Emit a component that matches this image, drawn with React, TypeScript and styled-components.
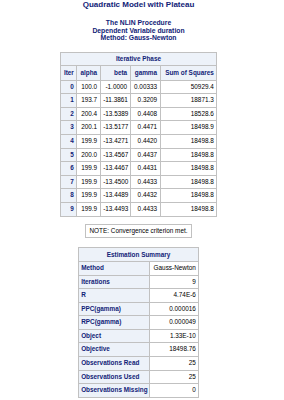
import React from "react";
import styled, { createGlobalStyle } from "styled-components";

const GlobalStyle = createGlobalStyle`
    html, body {
        margin: 0;
        padding: 0;
        background: #ffffff;
    }
    body {
        font-family: "Liberation Sans", Arial, sans-serif;
    }
`;

const Page = styled.div`
    width: 277px;
    display: flex;
    flex-direction: column;
    align-items: center;
    color: #112277;
`;

const Title = styled.div`
    font-size: 8px;
    font-weight: bold;
    line-height: 9.5px;
    margin-bottom: 9.3px;
`;

const Subtitles = styled.div`
    display: flex;
    flex-direction: column;
    align-items: center;
    font-size: 6.8px;
    font-weight: bold;
    line-height: 7.8px;
    margin-bottom: 9.8px;
`;

const Table = styled.table<{ $width: number }>`
    width: ${(p) => p.$width}px;
    table-layout: fixed;
    border-collapse: collapse;
    font-size: 6.4px;
`;

const Caption = styled.th<{ $h: number }>`
    background: #edf2f9;
    color: #112277;
    font-weight: bold;
    text-align: center;
    border: 1px solid #c1c1c1;
    padding: 0;
    line-height: ${(p) => p.$h}px;
`;

const ColHead = styled.th`
    background: #edf2f9;
    color: #112277;
    font-weight: bold;
    text-align: right;
    border: 1px solid #c1c1c1;
    padding: 0 2.5px;
    line-height: 14px;
    white-space: nowrap;
`;

const RowHead = styled.th<{ $align?: string }>`
    background: #edf2f9;
    color: #112277;
    font-weight: bold;
    text-align: ${(p) => p.$align || "right"};
    border: 1px solid #c1c1c1;
    padding: 0 2.5px;
    line-height: 12.6px;
    white-space: nowrap;
`;

const Cell = styled.td`
    background: #ffffff;
    color: #000000;
    text-align: right;
    border: 1px solid #c1c1c1;
    padding: 0 2.5px;
    line-height: 12.6px;
    white-space: nowrap;
`;

const Note = styled.div`
    margin: 7.6px 0 8.4px;
    border: 1px solid #c1c1c1;
    background: #ffffff;
    color: #000000;
    font-size: 6.4px;
    line-height: 12px;
    width: 104.7px;
    text-align: center;
    white-space: nowrap;
`;

const iterations = [
    ["0", "100.0", "-1.0000", "0.00333", "50929.4"],
    ["1", "193.7", "-11.3861", "0.3209", "18871.3"],
    ["2", "200.4", "-13.5389", "0.4408", "18528.6"],
    ["3", "200.1", "-13.5177", "0.4471", "18498.9"],
    ["4", "199.9", "-13.4271", "0.4420", "18498.8"],
    ["5", "200.0", "-13.4567", "0.4437", "18498.8"],
    ["6", "199.9", "-13.4467", "0.4431", "18498.8"],
    ["7", "199.9", "-13.4500", "0.4433", "18498.8"],
    ["8", "199.9", "-13.4489", "0.4432", "18498.8"],
    ["9", "199.9", "-13.4493", "0.4433", "18498.8"],
];

const summary = [
    ["Method", "Gauss-Newton"],
    ["Iterations", "9"],
    ["R", "4.74E-6"],
    ["PPC(gamma)", "0.000016"],
    ["RPC(gamma)", "0.000049"],
    ["Object", "1.33E-10"],
    ["Objective", "18498.76"],
    ["Observations Read", "25"],
    ["Observations Used", "25"],
    ["Observations Missing", "0"],
];

const App = () => {
    return (
        <>
            <GlobalStyle />
            <Page>
                <Title>Quadratic Model with Plateau</Title>
                <Subtitles>
                    <span>The NLIN Procedure</span>
                    <span>Dependent Variable duration</span>
                    <span>Method: Gauss-Newton</span>
                </Subtitles>

                <Table $width={156.7}>
                    <colgroup>
                        <col style={{ width: 16.7 }} />
                        <col style={{ width: 23.3 }} />
                        <col style={{ width: 30 }} />
                        <col style={{ width: 30 }} />
                        <col style={{ width: 56.7 }} />
                    </colgroup>
                    <thead>
                        <tr><Caption $h={11.7} colSpan={5}>Iterative Phase</Caption></tr>
                        <tr>
                            <ColHead>Iter</ColHead>
                            <ColHead>alpha</ColHead>
                            <ColHead>beta</ColHead>
                            <ColHead>gamma</ColHead>
                            <ColHead>Sum of Squares</ColHead>
                        </tr>
                    </thead>
                    <tbody>
                        {iterations.map((r) => (
                            <tr key={r[0]}>
                                <RowHead>{r[0]}</RowHead>
                                <Cell>{r[1]}</Cell>
                                <Cell>{r[2]}</Cell>
                                <Cell>{r[3]}</Cell>
                                <Cell>{r[4]}</Cell>
                            </tr>
                        ))}
                    </tbody>
                </Table>

                <Note>NOTE: Convergence criterion met.</Note>

                <Table $width={120.7}>
                    <colgroup>
                        <col style={{ width: 71.7 }} />
                        <col style={{ width: 49 }} />
                    </colgroup>
                    <thead>
                        <tr><Caption $h={13.3} colSpan={2}>Estimation Summary</Caption></tr>
                    </thead>
                    <tbody>
                        {summary.map((r) => (
                            <tr key={r[0]}>
                                <RowHead $align="left">{r[0]}</RowHead>
                                <Cell>{r[1]}</Cell>
                            </tr>
                        ))}
                    </tbody>
                </Table>
            </Page>
        </>
    );
};

export default App;
